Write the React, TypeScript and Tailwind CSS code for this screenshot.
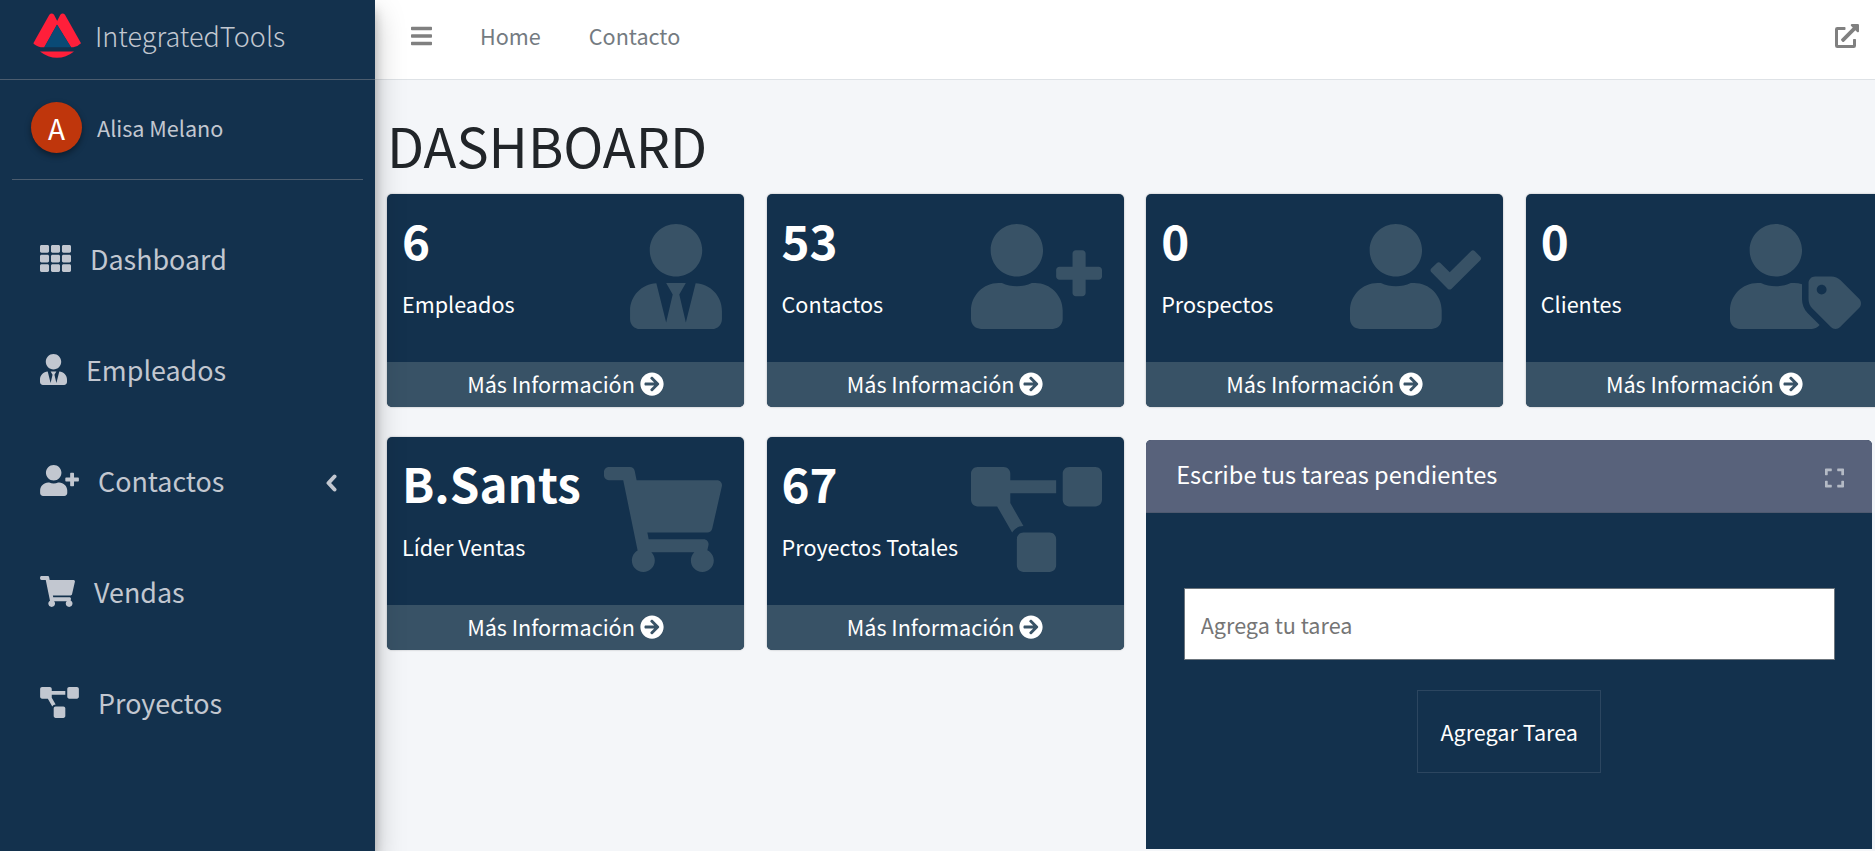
import type { ComponentType } from "react";
import {
  FaArrowCircleRight,
  FaBars,
  FaExpand,
  FaExternalLinkAlt,
  FaProjectDiagram,
  FaShoppingCart,
  FaTh,
  FaUserCheck,
  FaUserPlus,
  FaUserTag,
  FaUserTie,
} from "react-icons/fa";

type Icon = ComponentType<{ className?: string }>;

const menu: { icon: Icon; size: string; label: string; arrow?: boolean }[] = [
  { icon: FaTh, size: "w-[31px]", label: "Dashboard" },
  { icon: FaUserTie, size: "w-[27px]", label: "Empleados" },
  { icon: FaUserPlus, size: "w-[39px]", label: "Contactos", arrow: true },
  { icon: FaShoppingCart, size: "w-[35px]", label: "Vendas" },
  { icon: FaProjectDiagram, size: "w-[39px]", label: "Proyectos" },
];

const Logo = () => (
  <svg viewBox="99 28 144 134" className="h-[45px] w-[48px] shrink-0">
    <path d="M100 118 148 33Q155 25 162 33L172 52 171 62 133 130H122Q106 126 100 118Z" fill="#ff1f3a" />
    <path d="M243 118 195 33Q188 25 181 33L171 52 171 62 213 130H220Q236 126 243 118Z" fill="#ff1f3a" />
    <path d="M171 62 213 130H133Z" fill="#0a4a75" />
    <path d="M120 143 222 143Q198 162 171 162 144 162 120 143Z" fill="#ff1f3a" />
  </svg>
);

const Sidebar = () => (
  <aside className="relative z-10 flex w-[375px] shrink-0 flex-col bg-[#13314d] text-[#c2c7d0] shadow-[0_14px_28px_rgba(0,0,0,0.25),0_10px_10px_rgba(0,0,0,0.22)]">
    <div className="flex h-[80px] items-center gap-[14px] border-b border-[#4b5c6e] pb-[8px] pl-[33px]">
      <Logo />
      <span className="text-[27px] leading-none font-light">IntegratedTools</span>
    </div>
    <div className="mx-[12px] flex h-[100px] items-center gap-[15px] border-b border-[#4b5c6e] pb-[4px] pl-[19px]">
      <div className="flex h-[51px] w-[51px] items-center justify-center rounded-full bg-[#bf360c] text-[28px] text-white shadow-[0_3px_6px_rgba(0,0,0,0.4)]">
        A
      </div>
      <span className="text-[21.6px] leading-none">Alisa Melano</span>
    </div>
    <nav className="flex flex-col pt-[23px]">
      {menu.map((item) => (
        <a key={item.label} className="flex h-[111px] items-center gap-[19px] pr-[37px] pl-[40px]">
          <item.icon className={`h-[31px] shrink-0 ${item.size}`} />
          <span className="pt-[1px] text-[26.88px] leading-none">{item.label}</span>
          {item.arrow && (
            <svg viewBox="0 0 13 18" className="mt-[5px] ml-auto h-[18px] w-[13px]">
              <polyline points="9.5,2.5 3.5,9 9.5,15.5" fill="none" stroke="currentColor" strokeWidth="4" strokeLinecap="round" strokeLinejoin="round" />
            </svg>
          )}
        </a>
      ))}
    </nav>
  </aside>
);

const Navbar = () => (
  <header className="flex h-[80px] shrink-0 items-center border-b border-[#dee2e6] bg-white pb-[8px] pr-[16px] text-[#747b81]">
    <FaBars className="ml-[36px] h-[24px] w-[21px] text-[#808080]" />
    <a className="ml-[48px] text-[21.6px] leading-none">Home</a>
    <a className="ml-[48px] text-[21.6px] leading-none">Contacto</a>
    <FaExternalLinkAlt className="ml-auto h-[24px] w-[24px] text-[#808080]" />
  </header>
);

const StatCard = ({
  value,
  label,
  icon: CardIcon,
  iconSize,
}: {
  value: string;
  label: string;
  icon: Icon;
  iconSize: string;
}) => (
  <div className="relative flex h-[213px] w-[357px] shrink-0 flex-col overflow-hidden rounded-[5px] bg-[#13314d] text-white shadow-[0_0_2px_rgba(0,0,0,0.3)]">
    <div className="flex flex-1 flex-col pl-[15px]">
      <div className="mt-[22px] text-[47.5px] leading-[48px] font-bold">{value}</div>
      <div className="mt-[25px] text-[21.6px] leading-[30px]">{label}</div>
    </div>
    <CardIcon className={`absolute top-[30px] right-[22px] h-[105px] text-[#385266] ${iconSize}`} />
    <div className="flex h-[45px] items-center justify-center gap-[5px] bg-[#385266] pb-[1px] text-[21.6px] leading-none">
      Más Información
      <FaArrowCircleRight className="h-[24px] w-[24px]" />
    </div>
  </div>
);

const TaskPanel = () => (
  <section className="mt-[3px] flex h-[409px] w-[726px] shrink-0 flex-col overflow-hidden rounded-t-[5px] bg-[#13314d] text-white">
    <div className="flex h-[73px] shrink-0 items-center justify-between border-b border-[#4f5a70] bg-[#58627b] pr-[28px] pl-[30px]">
      <h3 className="mb-[3px] text-[23.6px] leading-none">Escribe tus tareas pendientes</h3>
      <FaExpand className="mt-[3px] h-[22px] w-[19px] text-[#b4bac5]" />
    </div>
    <div className="flex flex-col items-center pt-[75px]">
      <input
        placeholder="Agrega tu tarea"
        className="h-[72px] w-[651px] border border-[#6c757d] bg-white px-[16px] text-[21.6px] text-[#495057] outline-none placeholder:text-[#757575]"
      />
      <button className="mt-[30px] h-[83px] w-[184px] border border-[#2c4660] text-[21.6px] leading-none text-white">
        Agregar Tarea
      </button>
    </div>
  </section>
);

export default function App() {
  return (
    <div
      className="flex h-[851px] w-[1875px] overflow-hidden bg-[#f4f6f9]"
      style={{ fontFamily: '"Noto Sans CJK SC", "Noto Sans", sans-serif' }}
    >
      <Sidebar />
      <div className="flex min-w-0 flex-1 flex-col">
        <Navbar />
        <main className="flex flex-col pl-[12px]">
          <h1 className="flex h-[114px] items-center pt-[15px] text-[54px] leading-none font-normal text-[#212529]">
            DASHBOARD
          </h1>
          <div className="flex gap-[22.6px]">
            <StatCard value="6" label="Empleados" icon={FaUserTie} iconSize="w-[92px]" />
            <StatCard value="53" label="Contactos" icon={FaUserPlus} iconSize="w-[131px]" />
            <StatCard value="0" label="Prospectos" icon={FaUserCheck} iconSize="w-[131px]" />
            <StatCard value="0" label="Clientes" icon={FaUserTag} iconSize="w-[131px]" />
          </div>
          <div className="mt-[30px] flex gap-[22.6px]">
            <StatCard value="B.Sants" label="Líder Ventas" icon={FaShoppingCart} iconSize="w-[118px]" />
            <StatCard value="67" label="Proyectos Totales" icon={FaProjectDiagram} iconSize="w-[131px]" />
            <TaskPanel />
          </div>
        </main>
      </div>
    </div>
  );
}
